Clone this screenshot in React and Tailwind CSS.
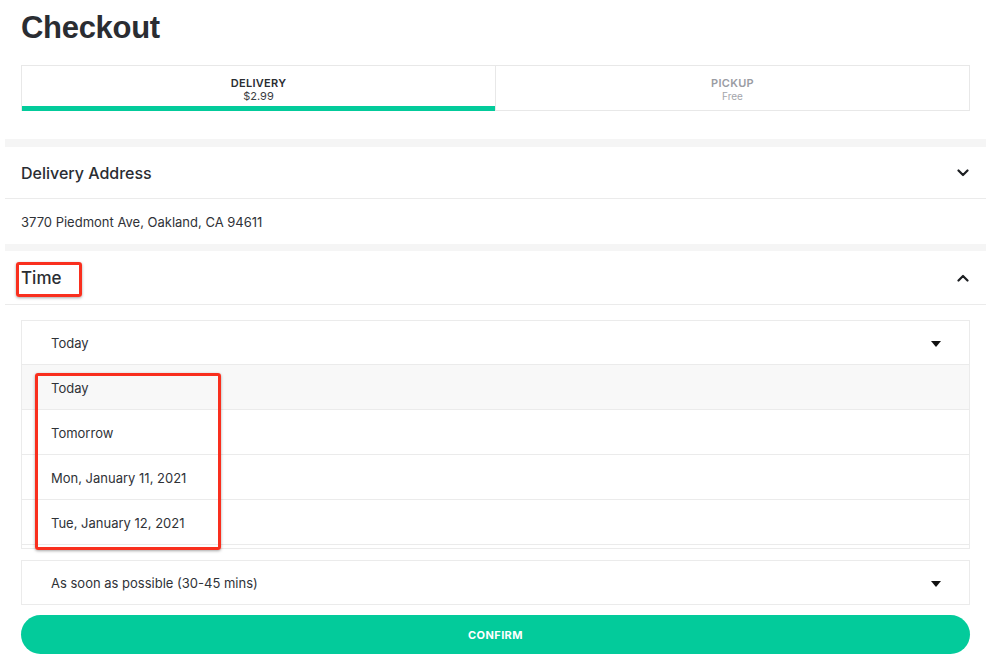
import React from 'react';

const font = { fontFamily: 'Inter, "Noto Sans", sans-serif' };

const Chevron = ({ up }) => (
  <svg width="12" height="8" viewBox="0 0 12 8" className="text-[#1d1f22]">
    <path
      d={up ? 'M1.5 6.5 L6 2 L10.5 6.5' : 'M1.5 1.5 L6 6 L10.5 1.5'}
      fill="none"
      stroke="currentColor"
      strokeWidth="2.2"
      strokeLinecap="round"
      strokeLinejoin="round"
    />
  </svg>
);

const Caret = () => (
  <svg width="10" height="6" viewBox="0 0 10 6">
    <path d="M0 0 H10 L5 6 Z" fill="#111" />
  </svg>
);

const dateOptions = ['Today', 'Tomorrow', 'Mon, January 11, 2021', 'Tue, January 12, 2021'];

export default function App() {
  return (
    <div className="min-h-screen bg-white text-[#2c2f34]" style={font}>
      <div className="relative w-[981px] ml-[5px]">
        <div className="px-4 pt-[8px]">
          <h1
            className="text-[31px] font-bold tracking-[-0.3px] leading-[40px] text-[#2a2d32]"
            style={{ fontFamily: '"Liberation Sans", Arial, sans-serif' }}
          >
            Checkout
          </h1>
        </div>

        {/* tabs */}
        <div className="px-4 mt-[17px] flex">
          <div className="flex-1 h-[46px] border-t border-l border-[#e8e8e8] flex flex-col">
            <div className="flex-1 flex flex-col items-center justify-center pt-[8px] leading-[13px]">
              <span className="text-[11px] font-semibold tracking-[0.3px] text-[#2a2d32]">DELIVERY</span>
              <span className="text-[11px] text-[#3a3d42]">$2.99</span>
            </div>
            <div className="h-[5px] bg-[#03cb9b]" />
          </div>
          <div className="flex-1 h-[46px] border border-[#e8e8e8] flex flex-col items-center justify-center pt-[3px] leading-[13px]">
            <span className="text-[11px] font-semibold tracking-[0.3px] text-[#9a9ca3]">PICKUP</span>
            <span className="text-[10px] text-[#a3a5ab]">Free</span>
          </div>
        </div>

        <div className="h-[8px] bg-[#f5f5f5] mt-[28px]" />

        {/* delivery address */}
        <div className="h-[52px] px-4 flex items-center justify-between border-b border-[#ebebeb]">
          <span className="text-[16px] font-medium text-[#2a2d32]">Delivery Address</span>
          <span className="mr-[1px]">
            <Chevron />
          </span>
        </div>
        <div className="h-[45px] px-4 pt-[3px] flex items-center">
          <span className="text-[13px] text-[#2f3237]">3770 Piedmont Ave, Oakland, CA 94611</span>
        </div>

        <div className="h-[7px] bg-[#f5f5f5]" />

        {/* time */}
        <div className="h-[54px] px-4 pt-[3px] flex items-center justify-between border-b border-[#ebebeb]">
          <span className="text-[17px] font-medium text-[#2a2d32]">Time</span>
          <span className="mr-[1px] -mt-[3px]">
            <Chevron up />
          </span>
        </div>

        <div className="px-4 pt-[15px]">
          <div className="border border-[#ebebeb]">
            <div className="h-[44px] pl-[29px] pr-[28px] pt-[2px] flex items-center justify-between border-b border-[#ebebeb]">
              <span className="text-[13px] text-[#2f3237]">Today</span>
              <Caret />
            </div>
            {dateOptions.map((opt, i) => (
              <div
                key={opt}
                className={`h-[45px] pl-[29px] pt-[3px] flex items-center border-b border-[#ebebeb] ${i === 0 ? 'bg-[#f8f8f8]' : 'bg-white'}`}
              >
                <span className="text-[13px] text-[#2f3237]">{opt}</span>
              </div>
            ))}
            <div className="h-[3px]" />
          </div>

          <div className="mt-[11px] h-[45px] border border-[#ebebeb] pl-[29px] pr-[28px] pt-[2px] flex items-center justify-between">
            <span className="text-[13px] text-[#2f3237]">As soon as possible (30-45 mins)</span>
            <Caret />
          </div>

          <button className="mt-[10px] w-full h-[39px] rounded-full bg-[#03cb9b] text-white text-[11px] font-bold tracking-[0.4px] pt-[1px]">
            CONFIRM
          </button>
        </div>

        {/* annotation boxes */}
        <div className="absolute left-[11px] top-[262px] w-[66px] h-[35px] border-[3px] border-[#f92f1e] rounded-[3px] shadow-[0_1px_3px_rgba(0,0,0,0.35)]" />
        <div className="absolute left-[30px] top-[373px] w-[186px] h-[177px] border-[3px] border-[#f92f1e] rounded-[3px] shadow-[0_1px_3px_rgba(0,0,0,0.35)]" />
      </div>
    </div>
  );
}
